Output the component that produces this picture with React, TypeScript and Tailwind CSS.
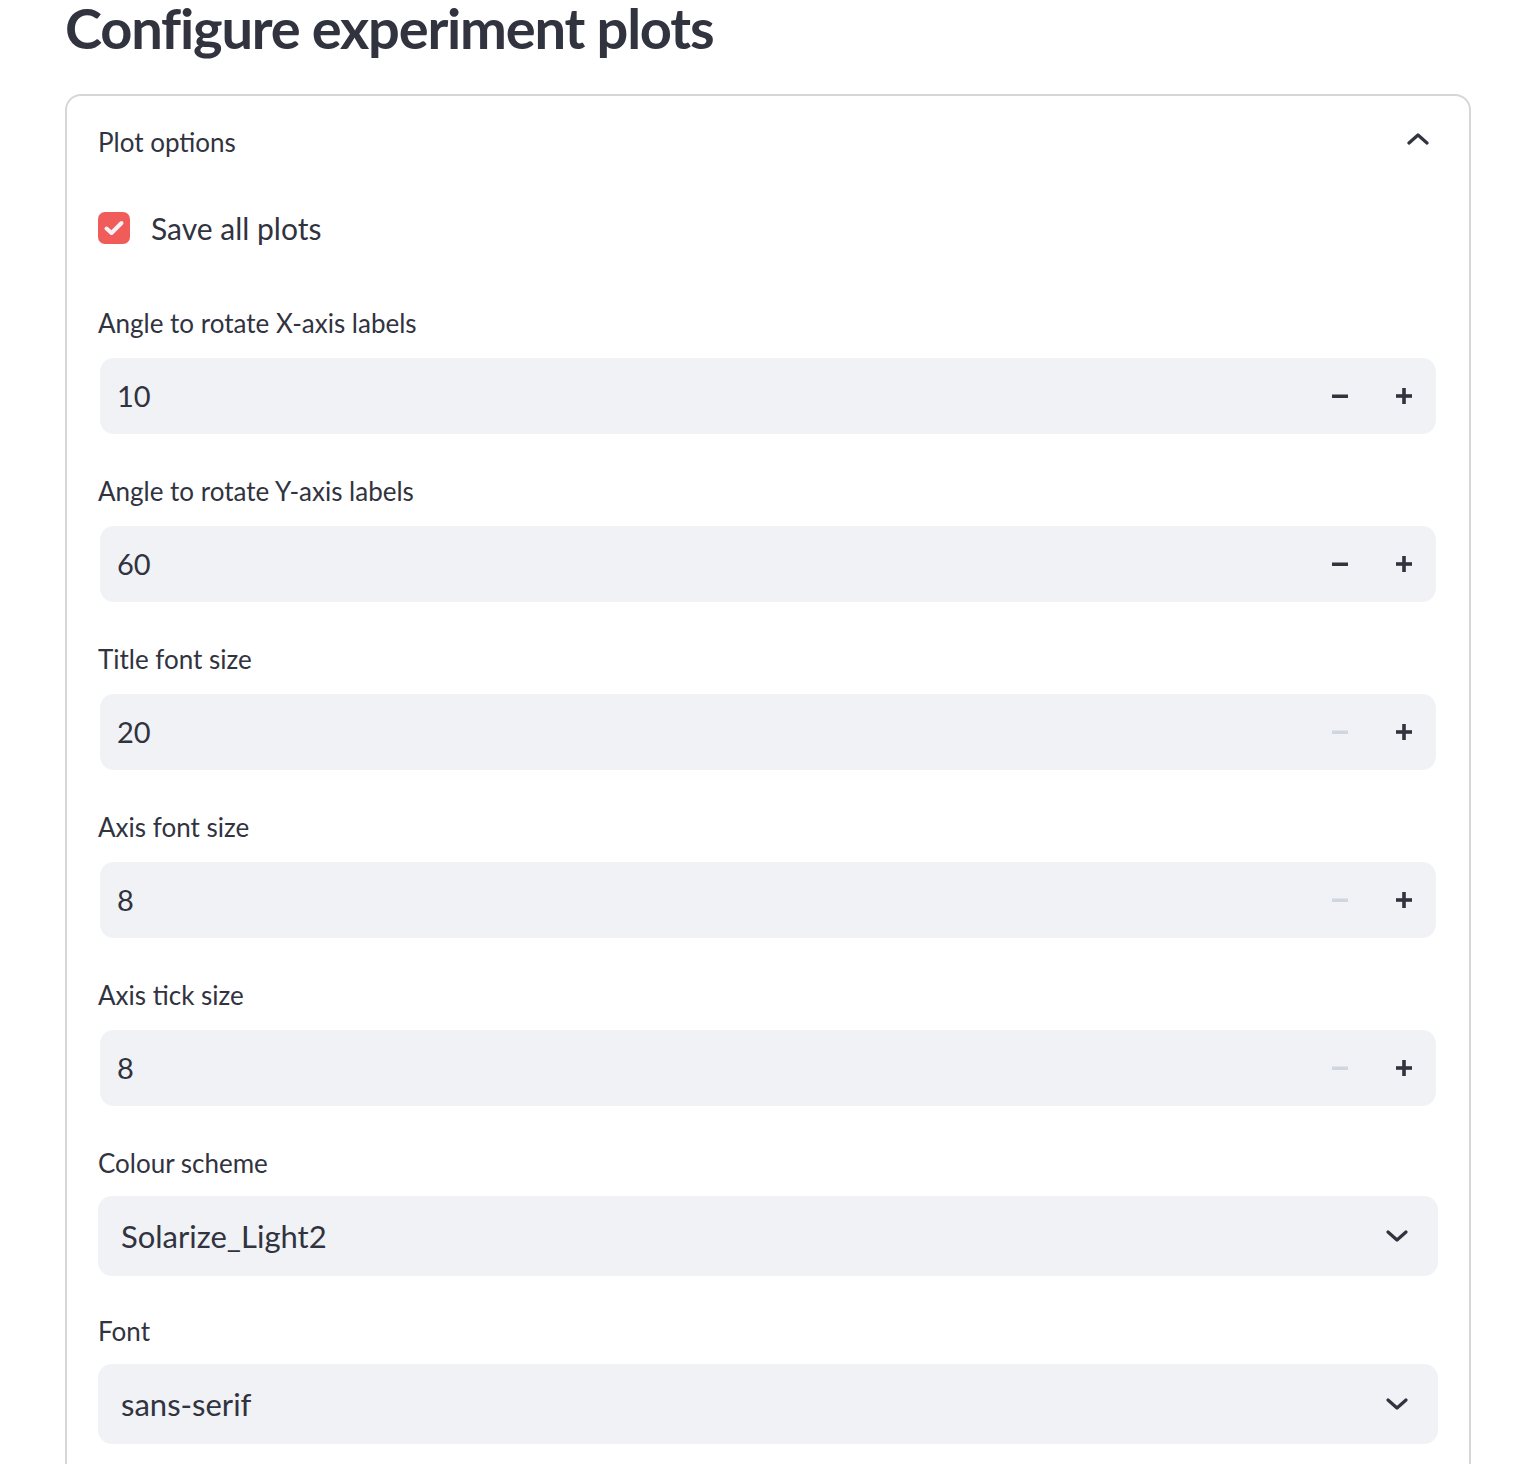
import React from 'react';

const font = { fontFamily: 'Lato, "Noto Sans", sans-serif' };

const Minus = ({ disabled }: { disabled?: boolean }) => (
  <svg width="16" height="16" viewBox="0 0 16 16" className={disabled ? 'text-[#d0d5e1]' : 'text-[#31333f]'}>
    <rect x="0" y="6.5" width="16" height="3.5" fill="currentColor" />
  </svg>
);

const Plus = () => (
  <svg width="16" height="16" viewBox="0 0 16 16" className="text-[#31333f]">
    <rect x="0" y="6.2" width="16" height="3.6" fill="currentColor" />
    <rect x="6.2" y="0" width="3.6" height="16" fill="currentColor" />
  </svg>
);

const Chevron = ({ up }: { up?: boolean }) => (
  <svg width="22" height="14" viewBox="0 0 22 14" fill="none" stroke="#31333f" strokeWidth="3.2" strokeLinecap="round" strokeLinejoin="round">
    {up ? <path d="M2 11 L11 3 L20 11" /> : <path d="M2 3 L11 11 L20 3" />}
  </svg>
);

type NumberField = { label: string; value: string; minDisabled?: boolean };

const numberFields: NumberField[] = [
  { label: 'Angle to rotate X-axis labels', value: '10' },
  { label: 'Angle to rotate Y-axis labels', value: '60' },
  { label: 'Title font size', value: '20', minDisabled: true },
  { label: 'Axis font size', value: '8', minDisabled: true },
  { label: 'Axis tick size', value: '8', minDisabled: true },
];

const selectFields = [
  { label: 'Colour scheme', value: 'Solarize_Light2' },
  { label: 'Font', value: 'sans-serif' },
];

export default function App() {
  return (
    <div className="min-h-screen bg-white text-[#31333f]" style={font}>
      <div className="pl-[65px] pr-[55px]">
        <h1 className="h-[94px] text-[56px] font-bold leading-[56px] tracking-[-1.2px]">
          Configure experiment plots
        </h1>
        <div className="rounded-t-[16px] border-2 border-b-0 border-[#d6d6d9] px-[31px] pb-[40px]">
          <div className="flex h-[92px] items-center justify-between">
            <span className="text-[26px] leading-[32px]">Plot options</span>
            <span className="mr-[9px] mb-[6px]"><Chevron up /></span>
          </div>
          <div className="flex h-[80px] items-center gap-[21px]">
            <div className="flex h-[32px] w-[32px] items-center justify-center rounded-[7px] bg-[#f05c5a]">
              <svg width="22" height="18" viewBox="0 0 22 18" fill="none" stroke="#f4f4f6" strokeWidth="4" strokeLinecap="round" strokeLinejoin="round">
                <path d="M3.5 9.5 L8.5 14 L18.5 4" />
              </svg>
            </div>
            <span className="text-[30px] leading-[36px]">Save all plots</span>
          </div>
          <div className="mt-[40px] flex flex-col">
            {numberFields.map((f) => (
              <div key={f.label} className="mb-[42px] flex flex-col">
                <label className="h-[32px] text-[26px] leading-[30px]">{f.label}</label>
                <div className="mx-[2px] mt-[18px] flex h-[76px] items-center rounded-[14px] bg-[#f0f2f6] pl-[17px] pr-[24px]">
                  <span className="flex-1 text-[29px] leading-[36px]">{f.value}</span>
                  <div className="flex items-center gap-[48px]">
                    <Minus disabled={f.minDisabled} />
                    <Plus />
                  </div>
                </div>
              </div>
            ))}
            {selectFields.map((f, i) => (
              <div key={f.label} className={`flex flex-col ${i === 0 ? 'mb-[40px]' : ''}`}>
                <label className="h-[32px] text-[26px] leading-[30px]">{f.label}</label>
                <div className="mt-[16px] flex h-[80px] items-center justify-between rounded-[14px] bg-[#f0f2f6] pl-[23px] pr-[30px]">
                  <span className="text-[31px] leading-[38px]">{f.value}</span>
                  <Chevron />
                </div>
              </div>
            ))}
          </div>
        </div>
      </div>
    </div>
  );
}
